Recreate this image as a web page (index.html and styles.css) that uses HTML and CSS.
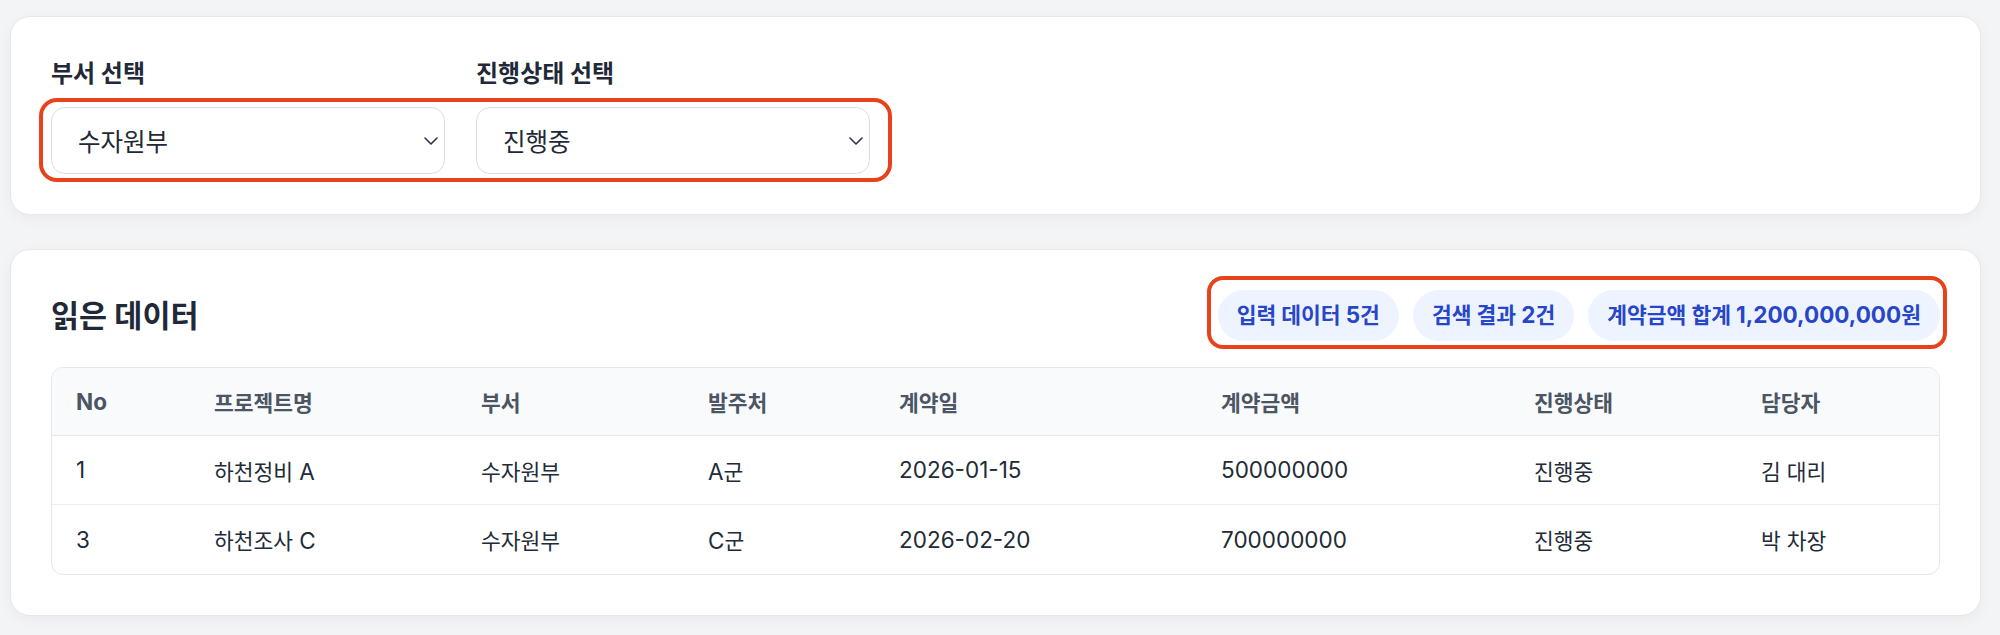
FILE: index.html
```html
<!DOCTYPE html>
<html lang="ko">
<head>
<meta charset="utf-8">
<title>읽은 데이터</title>
<link rel="stylesheet" href="styles.css">
</head>
<body>
<main class="page">
  <section class="card filter-card">
    <div class="field-row">
      <span class="field-label">부서 선택</span>
      <span class="field-label">진행상태 선택</span>
    </div>
    <div class="field-row selects">
      <div class="select">
        <span>수자원부</span>
        <svg class="chev" width="14" height="8" viewBox="0 0 14 8" aria-hidden="true"><path d="M1 1l6 6 6-6"/></svg>
      </div>
      <div class="select">
        <span>진행중</span>
        <svg class="chev" width="14" height="8" viewBox="0 0 14 8" aria-hidden="true"><path d="M1 1l6 6 6-6"/></svg>
      </div>
      <span class="mark mark-selects"></span>
    </div>
  </section>

  <section class="card data-card">
    <div class="data-head">
      <h2 class="title">읽은 데이터</h2>
      <div class="badges">
        <span class="badge">입력 데이터 <span class="lt">5</span>건</span>
        <span class="badge">검색 결과 <span class="lt">2</span>건</span>
        <span class="badge">계약금액 합계 <span class="lt">1,200,000,000</span>원</span>
        <span class="mark mark-badges"></span>
      </div>
    </div>
    <div class="table-wrap">
      <table class="data-table">
        <colgroup>
          <col class="c-no"><col class="c-name"><col class="c-dept"><col class="c-client">
          <col class="c-date"><col class="c-amount"><col class="c-status"><col class="c-owner">
        </colgroup>
        <thead>
          <tr>
            <th><span class="lt">No</span></th>
            <th>프로젝트명</th>
            <th>부서</th>
            <th>발주처</th>
            <th>계약일</th>
            <th>계약금액</th>
            <th>진행상태</th>
            <th>담당자</th>
          </tr>
        </thead>
        <tbody>
          <tr>
            <td><span class="lt">1</span></td>
            <td>하천정비 <span class="lt">A</span></td>
            <td>수자원부</td>
            <td><span class="lt">A</span>군</td>
            <td><span class="lt">2026-01-15</span></td>
            <td><span class="lt">500000000</span></td>
            <td>진행중</td>
            <td>김 대리</td>
          </tr>
          <tr>
            <td><span class="lt">3</span></td>
            <td>하천조사 <span class="lt">C</span></td>
            <td>수자원부</td>
            <td><span class="lt">C</span>군</td>
            <td><span class="lt">2026-02-20</span></td>
            <td><span class="lt">700000000</span></td>
            <td>진행중</td>
            <td>박 차장</td>
          </tr>
        </tbody>
      </table>
    </div>
  </section>
</main>
</body>
</html>
```

FILE: styles.css
```css
* {
  box-sizing: border-box;
}

html, body {
  margin: 0;
  padding: 0;
  background: #f3f4f6;
}

body {
  font-family: Inter, "Noto Sans CJK KR", sans-serif;
  color: #1f2937;
  font-size: 21.5px;
}

.page {
  padding: 16px 19px 20px 10px;
  display: flex;
  flex-direction: column;
  gap: 34px;
}

.card {
  background: #ffffff;
  border: 1px solid #e6e8ec;
  border-radius: 20px;
  box-shadow: 0 4px 14px rgba(15, 23, 42, 0.045);
  padding: 40px;
}

.filter-card {
  padding-bottom: 40px;
}

.field-row {
  display: grid;
  grid-template-columns: 394px 394px;
  column-gap: 31px;
  width: max-content;
}

.field-label {
  font-size: 24px;
  font-weight: 700;
  line-height: 34px;
  color: #1f2937;
  margin-bottom: 16px;
}

.selects {
  position: relative;
}

.select {
  height: 67px;
  border: 1px solid #d8dde5;
  border-radius: 14px;
  background: #ffffff;
  display: flex;
  align-items: center;
  justify-content: space-between;
  padding: 0 6px 0 26px;
  font-size: 24.5px;
  color: #1f2937;
}

.chev path {
  fill: none;
  stroke: #2d3748;
  stroke-width: 1.6;
  stroke-linecap: round;
  stroke-linejoin: round;
}

.mark {
  position: absolute;
  border: 4px solid #e8421d;
  border-radius: 18px;
  pointer-events: none;
}

.mark-selects {
  inset: -9px -22px -8px -12px;
}

.mark-badges {
  inset: -14px -7px -8px -11px;
  border-radius: 16px;
}

.data-head {
  display: flex;
  align-items: center;
  justify-content: space-between;
  margin-bottom: 26px;
}

.title {
  margin: 0;
  font-size: 30.5px;
  font-weight: 700;
  line-height: 40px;
  color: #1f2937;
}

.badges {
  position: relative;
  display: flex;
  gap: 14px;
}

.badge {
  background: #eef4ff;
  color: #2746c8;
  font-weight: 700;
  font-size: 21.5px;
  line-height: 27px;
  padding: 12px 19px;
  border-radius: 999px;
  white-space: nowrap;
}

.lt {
  font-size: 22.5px;
  line-height: 1;
}

.table-wrap {
  border: 1px solid #e5e7eb;
  border-radius: 12px;
  overflow: hidden;
}

.data-table {
  width: 100%;
  table-layout: fixed;
  border-collapse: separate;
  border-spacing: 0;
}

.c-no { width: 138px; }
.c-name { width: 267px; }
.c-dept { width: 227px; }
.c-client { width: 191px; }
.c-date { width: 322px; }
.c-amount { width: 313px; }
.c-status { width: 227px; }
.c-owner { width: 202px; }

.data-table th {
  height: 68px;
  padding: 0 24px;
  background: #f8fafc;
  border-bottom: 1px solid #e5e7eb;
  text-align: left;
  font-weight: 700;
  font-size: 21.5px;
  color: #4b5563;
  vertical-align: middle;
  white-space: nowrap;
}

.data-table td {
  height: 69px;
  padding: 0 24px;
  border-bottom: 1px solid #eceef1;
  font-size: 21.5px;
  color: #222b38;
  vertical-align: middle;
  white-space: nowrap;
}

.data-table tbody tr:last-child td {
  border-bottom: none;
}
```
